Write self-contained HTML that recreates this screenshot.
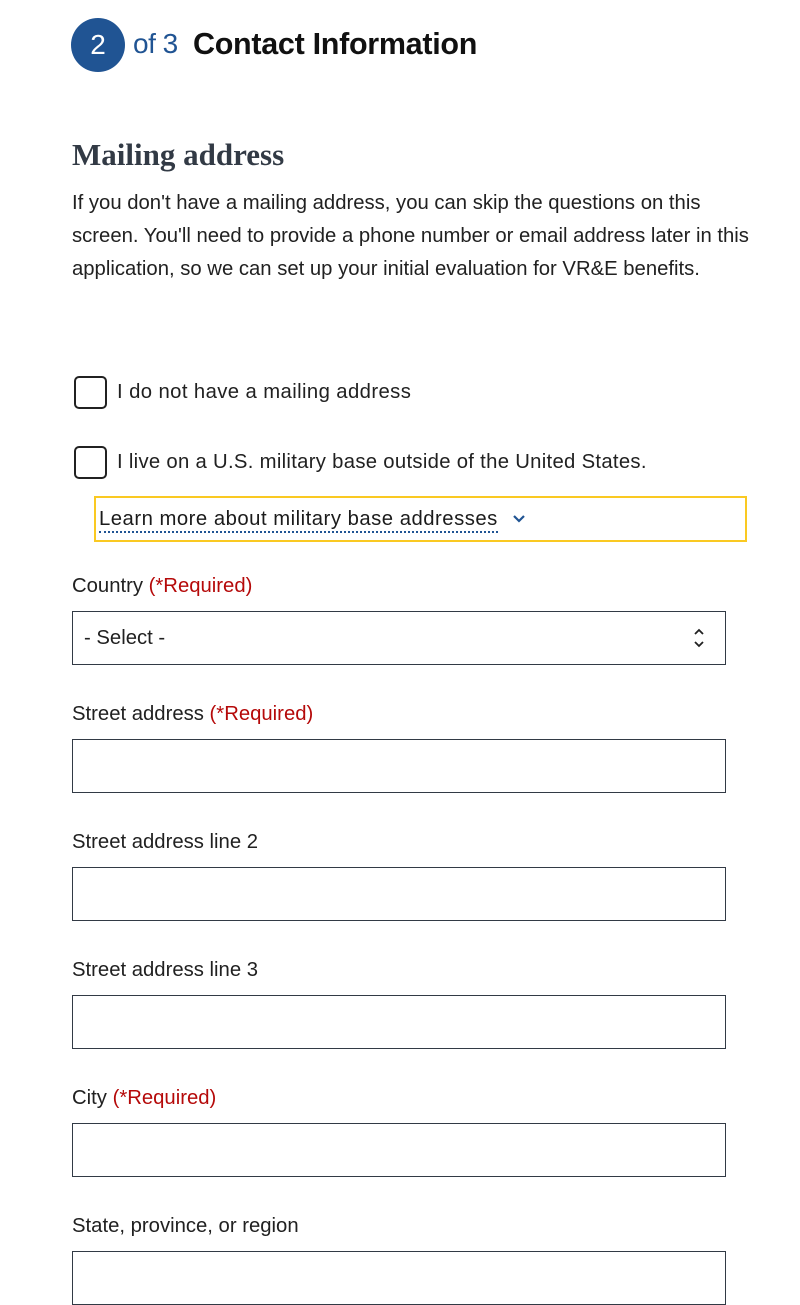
<!DOCTYPE html>
<html><head><style>
body{margin:0;width:800px;height:1276px;overflow:hidden;background:#fff;font-family:"Liberation Sans",sans-serif;color:#212121;position:relative}
.a{position:absolute;white-space:nowrap}
.t{font-size:20.3px;letter-spacing:0}
.box{position:absolute;left:72px;height:54px;border:1px solid #323a45;box-sizing:border-box;width:654px}
.cb{position:absolute;left:74px;width:33px;height:33px;border:2px solid #212121;border-radius:5px;box-sizing:border-box}
.req{color:#b50909}
</style></head><body>
<div class="a" style="left:71px;top:18px;width:54px;height:54px;border-radius:50%;background:#205493;color:#fff;font-size:28px;line-height:54px;text-align:center">2</div>
<div class="a" style="left:133px;top:28px;font-size:28px;color:#205493;letter-spacing:-0.5px">of 3</div>
<div class="a" style="left:193px;top:27px;font-size:30.5px;font-weight:bold;color:#111;letter-spacing:-0.3px">Contact Information</div>
<div class="a" style="left:72px;top:137px;font-family:'Liberation Serif',serif;font-weight:bold;font-size:31px;color:#323a45">Mailing address</div>
<div class="a t" style="left:72px;top:192px">If you don't have a mailing address, you can skip the questions on this</div>
<div class="a t" style="left:72px;top:225px">screen. You'll need to provide a phone number or email address later in this</div>
<div class="a t" style="left:72px;top:258px">application, so we can set up your initial evaluation for VR&amp;E benefits.</div>
<div class="cb" style="top:376px"></div>
<div class="a t" style="left:117px;top:381px;letter-spacing:0.4px">I do not have a mailing address</div>
<div class="cb" style="top:446px"></div>
<div class="a t" style="left:117px;top:451px;letter-spacing:0.3px">I live on a U.S. military base outside of the United States.</div>
<div class="a" style="left:94px;top:496px;width:653px;height:46px;border:2px solid #fac922;box-sizing:border-box"></div>
<div class="a t" style="left:99px;top:507px;color:#1b1b1b;border-bottom:2px dotted #205493;line-height:24px;letter-spacing:0.5px">Learn more about military base addresses</div>
<svg class="a" style="left:512px;top:514px" width="14" height="10" viewBox="0 0 14 10"><path d="M2 2l5 5 5-5" fill="none" stroke="#205493" stroke-width="2.2"/></svg>
<div class="a t" style="left:72px;top:575px">Country <span class="req">(*Required)</span></div>
<div class="box" style="top:611px"></div>
<div class="a t" style="left:84px;top:627px">- Select -</div>
<svg class="a" style="left:692px;top:627px" width="14" height="22" viewBox="0 0 14 22"><path d="M3 7l4-4 4 4M3 15l4 4 4-4" fill="none" stroke="#212121" stroke-width="1.8"/></svg>
<div class="a t" style="left:72px;top:703px">Street address <span class="req">(*Required)</span></div>
<div class="box" style="top:739px"></div>
<div class="a t" style="left:72px;top:831px">Street address line 2</div>
<div class="box" style="top:867px"></div>
<div class="a t" style="left:72px;top:959px">Street address line 3</div>
<div class="box" style="top:995px"></div>
<div class="a t" style="left:72px;top:1087px">City <span class="req">(*Required)</span></div>
<div class="box" style="top:1123px"></div>
<div class="a t" style="left:72px;top:1215px">State, province, or region</div>
<div class="box" style="top:1251px"></div>
</body></html>
